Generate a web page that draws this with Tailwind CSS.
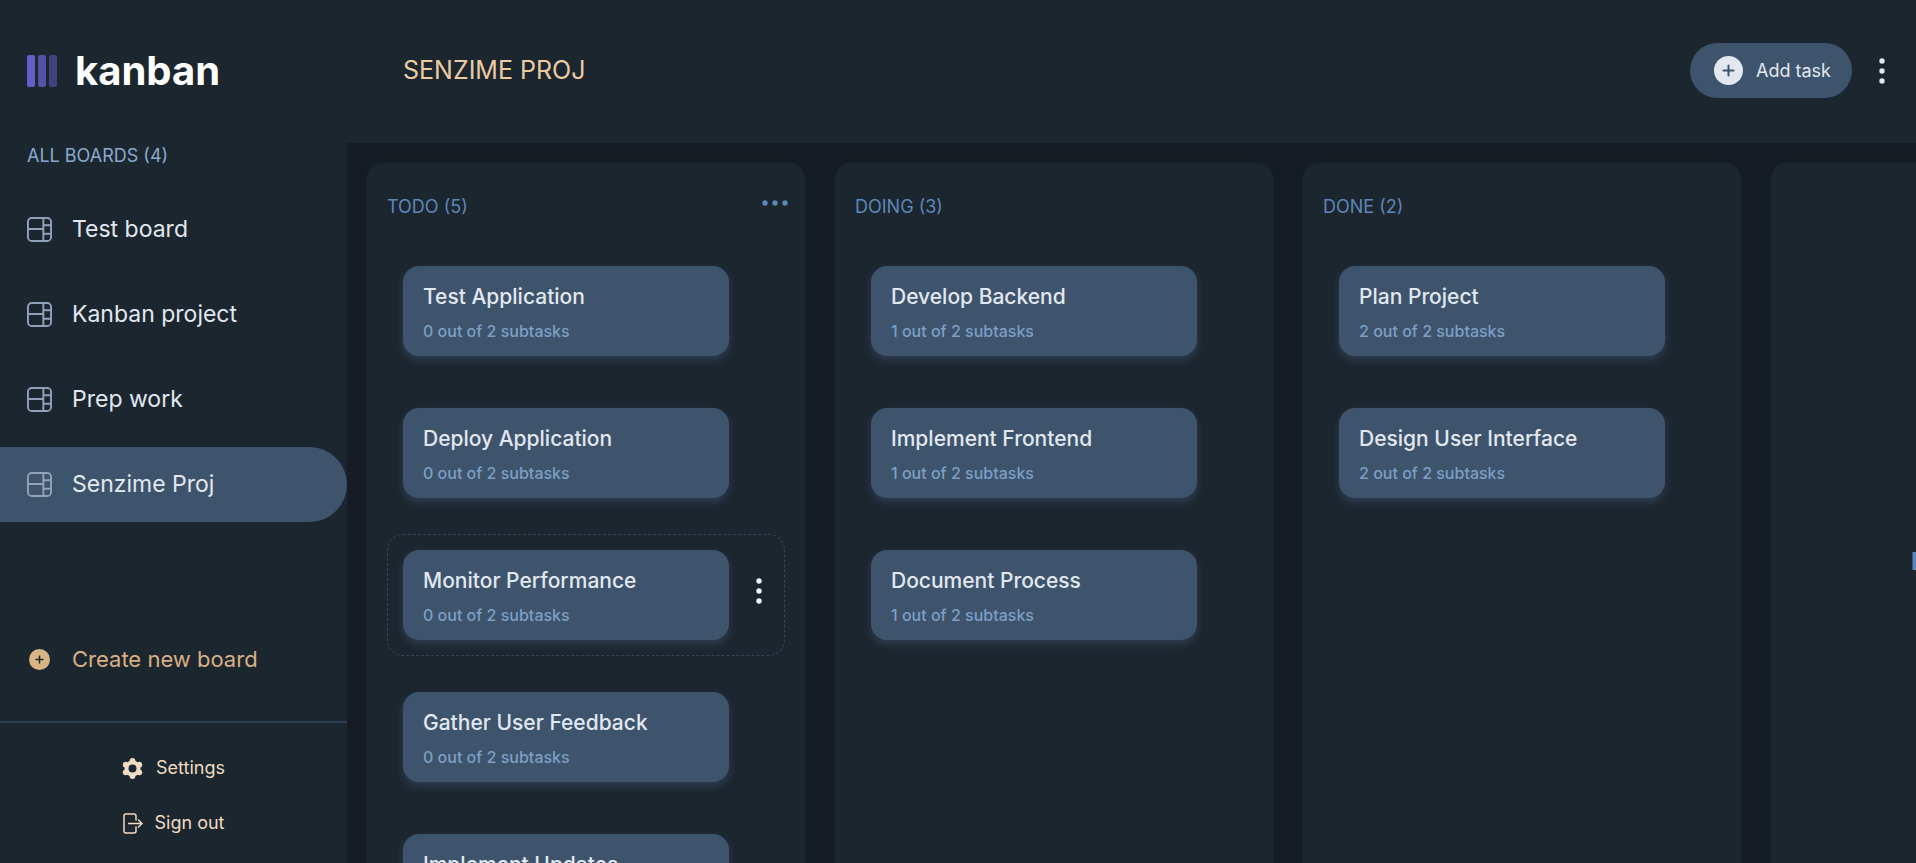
<!DOCTYPE html>
<html lang="en">
<head>
<meta charset="utf-8">
<meta name="viewport" content="width=device-width, initial-scale=1">
<title>Kanban</title>
<script src="https://cdn.jsdelivr.net/npm/@tailwindcss/browser@4"></script>
</head>
<body class="flex h-screen overflow-hidden bg-[#151c23] font-['Inter',sans-serif] text-slate-200">
<svg class="hidden">
  <symbol id="board" viewBox="0 0 26 26"><g fill="none" stroke="currentColor" stroke-width="2"><rect x="1" y="1" width="24" height="24" rx="4"/><path d="M17 1v24M1 12.500h16M17 8.500h8M17 17.500h8"/></g></symbol>
  <symbol id="dots" viewBox="0 0 6 26"><g fill="currentColor"><circle cx="3" cy="3" r="2.700"/><circle cx="3" cy="13" r="2.700"/><circle cx="3" cy="23" r="2.700"/></g></symbol>
</svg>

<aside class="flex w-[347px] shrink-0 flex-col bg-[#1c262f]">
  <div class="flex h-[143px] shrink-0 items-center gap-[18px] pb-0.5 pl-[27px]">
    <svg class="h-8 w-[30px]" viewBox="0 0 30 32"><rect width="8" height="32" rx="2" fill="#635fc7"/><rect x="11" width="8" height="32" rx="2" fill="#5451a6"/><rect x="22" width="8" height="32" rx="2" fill="#41437f"/></svg>
    <span class="text-[40px] leading-none font-bold text-white">kanban</span>
  </div>
  <h2 class="pt-px pl-[27px] text-lg leading-6 text-[#8aa9cf]">ALL BOARDS (4)</h2>
  <nav class="mt-6 flex flex-col gap-[10px] text-[23px] text-slate-200">
    <a href="#" class="flex h-[75px] items-center gap-5 rounded-r-full pl-[27px]"><svg class="size-[25px] text-slate-400"><use href="#board"/></svg>Test board</a>
    <a href="#" class="flex h-[75px] items-center gap-5 rounded-r-full pl-[27px]"><svg class="size-[25px] text-slate-400"><use href="#board"/></svg>Kanban project</a>
    <a href="#" class="flex h-[75px] items-center gap-5 rounded-r-full pl-[27px]"><svg class="size-[25px] text-slate-400"><use href="#board"/></svg>Prep work</a>
    <a href="#" aria-current="page" class="flex h-[75px] items-center gap-5 rounded-r-full bg-[#3e546c] pl-[27px]"><svg class="size-[25px] text-slate-400"><use href="#board"/></svg>Senzime Proj</a>
  </nav>
  <div class="mt-auto">
    <button class="flex h-[75px] items-center gap-[22px] pl-[29px] text-[22px] text-[#d9b083]"><svg class="size-[21px]" viewBox="0 0 21 21"><circle cx="10.500" cy="10.500" r="10.500" fill="#d9b485"/><path d="M10.500 6.500v8M6.500 10.500h8" stroke="#1c262f" stroke-width="1.500"/></svg>Create new board</button>
    <div class="mt-6 flex flex-col items-center gap-[15px] border-t-2 border-[#2f3f57] pt-[25px] pb-5 text-lg text-[#efdcc3]">
      <button class="flex h-10 items-center gap-[13px]"><svg class="size-[21px]" viewBox="0 0 21 21" fill="currentColor"><circle cx="10.500" cy="10.500" r="6" fill="none" stroke="currentColor" stroke-width="4"/><circle cx="10.500" cy="3" r="2.900"/><circle cx="10.500" cy="18" r="2.900"/><circle cx="3.700" cy="6.700" r="2.900"/><circle cx="17.300" cy="6.700" r="2.900"/><circle cx="3.700" cy="14.300" r="2.900"/><circle cx="17.300" cy="14.300" r="2.900"/></svg>Settings</button>
      <button class="flex h-10 items-center gap-3"><svg class="h-[21px] w-5" viewBox="0 0 20 21" fill="none" stroke="currentColor" stroke-width="1.500"><path d="M13 7.500V3a2 2 0 0 0-2-2H3a2 2 0 0 0-2 2v15a2 2 0 0 0 2 2h8a2 2 0 0 0 2-2v-4.500M5 10.500h14M15 6.500l4 4-4 4"/></svg>Sign out</button>
    </div>
  </div>
</aside>

<main class="flex min-w-0 flex-1 flex-col">
  <header class="flex h-[143px] shrink-0 items-center bg-[#1c262f] pr-[31px] pb-0.5 pl-14">
    <h1 class="text-[25px] text-[#ebcba4]">SENZIME PROJ</h1>
    <button class="ml-auto flex h-[55px] items-center gap-[13px] rounded-full bg-[#3e546c] pr-[21px] pl-6 text-lg text-slate-200"><svg class="size-[29px]" viewBox="0 0 29 29"><circle cx="14.500" cy="14.500" r="14.500" fill="#e2e8f0"/><path d="M14.500 9.500v10M9.500 14.500h10" stroke="#3e546c" stroke-width="2" stroke-linecap="round"/></svg>Add task</button>
    <button aria-label="Board menu" class="ml-[27px]"><svg class="h-[26px] w-[6px]"><use href="#dots"/></svg></button>
  </header>
  <div id="columns" class="flex min-h-0 flex-1 gap-[30px] overflow-hidden pt-5 pl-5"></div>
</main>

<script>
const columns = [
  ['TODO', 0, ['Test Application', 'Deploy Application', 'Monitor Performance', 'Gather User Feedback', 'Implement Updates']],
  ['DOING', 1, ['Develop Backend', 'Implement Frontend', 'Document Process']],
  ['DONE', 2, ['Plan Project', 'Design User Interface']],
];
const card = (title, done, active) => `
  <li class="flex items-center rounded-2xl border border-dashed p-[15px] ${active ? 'border-[#33455a]' : 'border-transparent'}">
    <button class="flex h-[90px] w-[326px] flex-col justify-center rounded-2xl bg-[#3e546c] px-5 pt-1 text-left shadow-[0_4px_8px_#2f3e52]">
      <span class="text-[21px] leading-7 font-medium text-slate-200">${title}</span>
      <span class="mt-2 text-base leading-6 font-medium text-[#7c9fc6]">${done} out of 2 subtasks</span>
    </button>
    ${active ? '<button aria-label="Task menu" class="mb-2 ml-[27px] text-slate-100"><svg class="h-[26px] w-[6px]"><use href="#dots"/></svg></button>' : ''}
  </li>`;
document.getElementById('columns').innerHTML = columns.map(([name, done, tasks], c) => `
  <section class="h-[900px] w-[438px] shrink-0 rounded-2xl bg-[#1c262f] px-5 pt-7 shadow-[0_0_8px_#19222a]">
    <div class="flex h-[59px] items-start justify-between">
      <h2 class="pt-1 text-lg leading-6 text-[#5d87b8]">${name} (${tasks.length})</h2>
      ${c === 0 ? '<button aria-label="Column menu" class="-mr-[3px] pt-[9px] text-[#5d87b8]"><svg class="h-[6px] w-[26px]" viewBox="0 0 26 6" fill="currentColor"><circle cx="3" cy="3" r="2.700"/><circle cx="13" cy="3" r="2.700"/><circle cx="23" cy="3" r="2.700"/></svg></button>' : ''}
    </div>
    <ul class="flex flex-col gap-5">${tasks.map(t => card(t, done, t === 'Monitor Performance')).join('')}</ul>
  </section>`).join('') + `
  <section class="flex h-[798px] w-[438px] shrink-0 items-center rounded-2xl bg-[#1c262f] pl-[140px] shadow-[0_0_8px_#19222a]">
    <button class="text-2xl font-bold text-[#5d87b8]">New Column</button>
  </section>`;
</script>
</body>
</html>
